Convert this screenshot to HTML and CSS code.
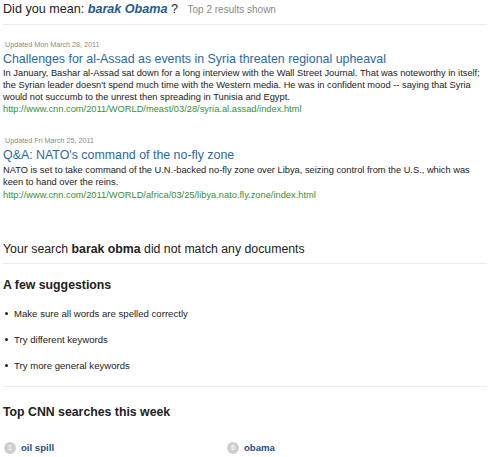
FILE: index.html
```html
<!DOCTYPE html>
<html lang="en">
<head>
  <meta charset="UTF-8">
  <title>Search results</title>
  <link rel="stylesheet" href="styles.css">
</head>
<body>
  <div class="page">
    <!-- spelling suggestion -->
    <div class="didyoumean">
      Did you mean: <a href="#" class="suggest">barak Obama</a> ?
      <span class="shown">Top 2 results shown</span>
    </div>

    <!-- results -->
    <div class="result">
      <div class="updated">Updated Mon March 28, 2011</div>
      <a href="#" class="title">Challenges for al-Assad as events in Syria threaten regional upheaval</a>
      <p class="desc">In January, Bashar al-Assad sat down for a long interview with the Wall Street Journal. That was noteworthy in itself; the Syrian leader doesn't spend much time with the Western media. He was in confident mood -- saying that Syria would not succumb to the unrest then spreading in Tunisia and Egypt.</p>
      <div class="url">http://www.cnn.com/2011/WORLD/meast/03/28/syria.al.assad/index.html</div>
    </div>

    <div class="result">
      <div class="updated">Updated Fri March 25, 2011</div>
      <a href="#" class="title">Q&amp;A: NATO's command of the no-fly zone</a>
      <p class="desc">NATO is set to take command of the U.N.-backed no-fly zone over Libya, seizing control from the U.S., which was keen to hand over the reins.</p>
      <div class="url">http://www.cnn.com/2011/WORLD/africa/03/25/libya.nato.fly.zone/index.html</div>
    </div>

    <div class="nomatch">Your search <strong>barak obma</strong> did not match any documents</div>

    <div class="suggestions">
      <h3>A few suggestions</h3>
      <ul>
        <li>Make sure all words are spelled correctly</li>
        <li>Try different keywords</li>
        <li>Try more general keywords</li>
      </ul>
    </div>

    <div class="top">
      <h3>Top CNN searches this week</h3>
      <div class="top-list">
        <a href="#" class="top-item"><span class="num">1</span>oil spill</a>
        <a href="#" class="top-item"><span class="num">6</span>obama</a>
      </div>
    </div>
  </div>
</body>
</html>
```

FILE: styles.css
```css
body {
  margin: 0;
  background: #fff;
  font-family: "Liberation Sans", Arial, Helvetica, sans-serif;
  color: #222;
}

.page {
  padding: 0 3px;
}

a {
  text-decoration: none;
}

.didyoumean {
  font-size: 12.6px;
  line-height: 18px;
  padding-bottom: 5px;
  border-bottom: 1px solid #e8ecee;
  color: #222;
}

.suggest {
  color: #1f5a92;
  font-weight: bold;
  font-style: italic;
}

.shown {
  font-size: 10px;
  color: #8a8a8a;
  margin-left: 6px;
}

.result {
  padding-top: 15px;
}

.result + .result {
  padding-top: 20px;
}

.updated {
  font-size: 7.2px;
  color: #8a8a8a;
  line-height: 10px;
  margin-bottom: 2px;
  padding-left: 2px;
}

.title {
  display: block;
  font-size: 12.4px;
  line-height: 15px;
  color: #2a6aa6;
}

.desc {
  margin: 0;
  font-size: 9.3px;
  line-height: 12px;
  color: #222;
}

.result + .result .desc {
  margin-top: 1px;
}

.url {
  font-size: 9.3px;
  line-height: 13px;
  color: #3c8c3c;
}

.result + .result .url {
  margin-top: 1px;
}

.nomatch {
  margin-top: 39px;
  font-size: 12.3px;
  line-height: 16px;
  padding-bottom: 6px;
  border-bottom: 1px solid #e8ecee;
}

h3 {
  margin: 0;
  font-size: 12.3px;
  line-height: 16px;
  font-weight: bold;
}

.suggestions {
  padding-top: 13px;
  padding-bottom: 14px;
  border-bottom: 1px solid #e8ecee;
}

.suggestions ul {
  list-style: none;
  margin: 15px 0 0 0;
  padding: 0;
}

.suggestions li {
  font-size: 9.6px;
  line-height: 12px;
  margin-bottom: 14px;
}

.suggestions li::before {
  content: "";
  display: inline-block;
  width: 3px;
  height: 3px;
  border-radius: 50%;
  background: #222;
  vertical-align: middle;
  margin: 0 6px 1px 2px;
}

.suggestions li:last-child {
  margin-bottom: 0;
}

.top {
  padding-top: 17px;
}

.top-list {
  display: grid;
  grid-template-columns: 223px 1fr;
  margin-top: 21px;
  border-bottom: 1px solid #e8ecee;
  padding-bottom: 4px;
}

.top-item {
  display: flex;
  align-items: center;
  gap: 5px;
  font-size: 9.6px;
  font-weight: bold;
  color: #1f4f80;
  line-height: 14px;
}

.num {
  width: 12px;
  height: 12px;
  border-radius: 50%;
  background: #cfcfcf;
  color: #f4f4f4;
  font-size: 7px;
  line-height: 12px;
  text-align: center;
  margin-left: 1px;
}
```
